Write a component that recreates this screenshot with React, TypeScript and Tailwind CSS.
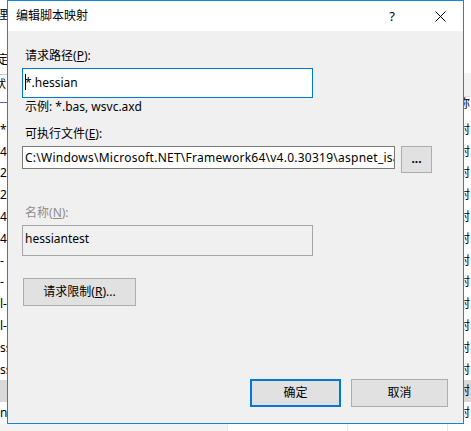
import React from "react";

const cjk = '"Segoe UI", "Noto Sans", "Noto Sans CJK SC", sans-serif';

// rows of the window behind the dialog (left and right slivers)
const leftRows = ["*", "4", "2.", "2.", "4.", "4.", "-", "-", "l-", "l-", "ss", "ss", "", "ng"];
const rightRows = ["封", "封", "封", "封", "封", "封", "封", "封", "封", "封", "封", "封", "封", "封"];

function Label({ text, mnemonic, tail, disabled }: { text: string; mnemonic: string; tail?: string; disabled?: boolean }) {
  return (
    <div className={`h-4 leading-4 text-[12px] ${disabled ? "text-[#8d8d8d]" : "text-black"}`}>
      {text}(<u>{mnemonic}</u>){tail ?? ":"}
    </div>
  );
}

export default function App() {
  return (
    <div className="relative w-[471px] h-[431px] overflow-hidden bg-white" style={{ fontFamily: cjk }}>
      {/* Ventana de fondo */}
      <div className="flex h-[424px]">
        <div className="w-[7px] overflow-hidden flex flex-col text-[12px] text-black">
          <div className="h-[8px]" />
          <div className="h-[14px] leading-[14px] -ml-[4px]">理</div>
          <div className="h-[30px]" />
          <div className="h-[16px] leading-[16px] -ml-[3px]">定</div>
          <div className="h-[7px] border-b border-[#c8c8c8]" />
          <div className="h-[17px] leading-[17px] -ml-[5px] text-[11px]">状</div>
          <div className="h-[11px] border-b border-[#6b5fa0]" />
          <div className="h-[16px]" />
          {leftRows.map((r, i) => (
            <div
              key={i}
              className={`h-[21.8px] leading-[21.8px] whitespace-nowrap ${i === 12 ? "bg-[#d9d9d9]" : ""}`}
            >
              {r}
            </div>
          ))}
        </div>
        <div className="flex-1" />
        <div className="w-[7px] overflow-hidden flex flex-col text-[12px] text-black">
          <div className="h-[77px]" />
          <div className="h-[25px] bg-[#f2f2f2] border-b border-[#e0e0e0]" />
          <div className="h-[14px] leading-[14px] -ml-[6px]">称</div>
          <div className="h-[8px]" />
          {rightRows.map((r, i) => (
            <div
              key={i}
              className={`h-[21.8px] leading-[21.8px] -ml-[6px] ${i === 12 ? "bg-[#d9d9d9]" : ""}`}
            >
              {r}
            </div>
          ))}
        </div>
      </div>
      <div className="flex h-[7px] bg-white">
        <div className="w-[228px] bg-[#f3f3f3] border-r border-[#e6e6f0]" />
        <div className="w-[120px] border-r border-[#e6e6f0]" />
        <div className="w-[100px] border-r border-[#e6e6f0]" />
      </div>

      {/* Diálogo */}
      <div className="absolute left-[7px] top-0 w-[457px] h-[424px] border border-[#1883d7] bg-[#f0f0f0] flex flex-col">
        {/* Barra de título */}
        <div className="h-[30px] bg-white flex items-center text-[12px] text-black">
          <span className="ml-[8px] leading-4">编辑脚本映射</span>
          <span className="ml-auto mr-[40px] text-[13px] leading-4">?</span>
          <svg width="11" height="11" viewBox="0 0 11 11" className="mr-[17px]">
            <path d="M0.5 0.5 L10.5 10.5 M10.5 0.5 L0.5 10.5" stroke="#000" strokeWidth="1" />
          </svg>
        </div>

        {/* Contenido */}
        <div className="flex-1 flex flex-col pl-[14px] pr-[15px] pb-[16px] text-[12px] text-black">
          <div className="mt-[17px] ml-[3px]">
            <Label text="请求路径" mnemonic="P" />
          </div>
          <div className="relative mt-[4px] w-[291px] h-[30px] bg-white border border-[#0078d7] flex items-center pl-[2px]">
            <span className="leading-4">*.hessian</span>
            <span className="absolute left-[2px] top-[5px] w-px h-[16px] bg-black" />
          </div>
          <div className="mt-[1px] ml-[3px] h-4 leading-4">示例: *.bas, wsvc.axd</div>

          <div className="mt-[11px] ml-[3px]">
            <Label text="可执行文件" mnemonic="E" />
          </div>
          <div className="mt-[4px] flex items-start gap-[6px]">
            <div className="w-[373px] h-[23px] bg-white border border-[#7a7a7a] flex items-center pl-[2px] overflow-hidden whitespace-nowrap">
              <span className="leading-4 tracking-[0.25px]">C:\Windows\Microsoft.NET\Framework64\v4.0.30319\aspnet_isapi.dll</span>
            </div>
            <button className="w-[31px] h-[27px] bg-[#e1e1e1] border border-[#adadad] flex items-center justify-center font-bold leading-none pb-[2px]">
              ...
            </button>
          </div>

          <div className="mt-[32px] ml-[3px]">
            <Label text="名称" mnemonic="N" disabled />
          </div>
          <div className="mt-[4px] w-[291px] h-[31px] bg-[#f0f0f0] border border-[#a5a5a5] flex items-start pt-[5px] pl-[2px]">
            <span className="leading-4">hessiantest</span>
          </div>

          <button className="mt-[22px] ml-[1px] w-[113px] h-[28px] bg-[#e1e1e1] border border-[#adadad] flex items-center justify-center leading-4">
            请求限制(<u>R</u>)...
          </button>

          <div className="flex-1" />
          <div className="flex justify-end gap-[10px]">
            <button className="w-[91px] h-[28px] bg-[#e1e1e1] border-2 border-[#0078d7] flex items-center justify-center leading-4">
              确定
            </button>
            <button className="w-[97px] h-[28px] bg-[#e1e1e1] border border-[#adadad] flex items-center justify-center leading-4">
              取消
            </button>
          </div>
        </div>
      </div>
    </div>
  );
}
